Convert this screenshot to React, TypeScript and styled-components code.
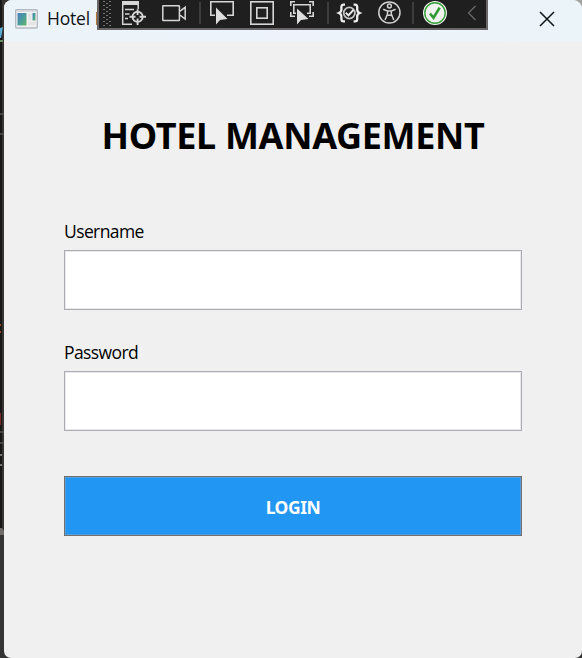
import React from "react";
import styled, { createGlobalStyle } from "styled-components";

const GlobalStyle = createGlobalStyle`
  * { box-sizing: border-box; }
  body { margin: 0; overflow: hidden; background: #1c1c1c; }
`;

const Screen = styled.div`
  position: relative;
  width: 582px;
  height: 658px;
  padding-left: 4px;
  overflow: hidden;
  background: linear-gradient(90deg, #343434 50%, #a2a2a2 50%) top / 100% 20px no-repeat, #343434;
  font-family: "Open Sans", "Noto Sans", sans-serif;
`;

const Backdrop = styled.svg`
  position: absolute;
  left: 0;
  top: 0;
`;

const Window = styled.main`
  position: relative;
  display: flex;
  flex-direction: column;
  width: 578px;
  height: 658px;
  overflow: hidden;
  border-radius: 8px 9px 7px 7px;
  background: #f0f0f0;
`;

const TitleBar = styled.header`
  display: flex;
  align-items: center;
  flex: none;
  height: 41px;
  padding: 0 27px 4px 11px;
  background: linear-gradient(90deg, #ebf4f9, #eef3fb 50%, #ebf4f9);
`;

const WindowTitle = styled.span`
  margin: -2px 0 0 9px;
  flex: 1;
  font-size: 17.5px;
  line-height: 24px;
  letter-spacing: -0.2px;
  word-spacing: 0.4px;
  white-space: nowrap;
  color: #101214;
`;

const CloseButton = styled.button`
  display: flex;
  padding: 0;
  border: 0;
  background: none;
`;

const DebugBar = styled.div`
  position: absolute;
  left: 97px;
  top: 0;
  width: 391px;
  height: 30px;
  border: solid #6b6767;
  border-width: 0 2px 2px;
  background: #1f1f1f;
`;

const Form = styled.form`
  display: flex;
  flex-direction: column;
  padding: 68px 60px 0;
`;

const Heading = styled.h1`
  margin: 0 0 59px;
  height: 54px;
  text-align: center;
  white-space: nowrap;
  font-family: "Noto Sans", sans-serif;
  font-size: 36px;
  line-height: 54px;
  font-weight: 700;
  letter-spacing: -0.32px;
  color: #000;
`;

const Field = styled.div`
  display: flex;
  flex-direction: column;
  height: 121px;
`;

const Label = styled.label<{ $spacing: number }>`
  height: 28px;
  font-size: 17.5px;
  line-height: 18px;
  letter-spacing: ${(p) => p.$spacing}px;
  color: #000;
`;

const Input = styled.input`
  width: 458px;
  height: 60px;
  padding: 0 12px;
  border: 1px solid #abadb3;
  outline: none;
  background: #fff;
  box-shadow: inset 0 0 0 1px #e9e9ec;
  font: inherit;
  font-size: 18px;
`;

const LoginButton = styled.button`
  height: 60px;
  margin-top: 12px;
  padding: 1px 0 0;
  border: 1px solid #707070;
  background: #2196f3;
  box-shadow: inset 0 0 0 1px #559ddb;
  color: #fff;
  font: 700 17.5px/24px "Noto Sans", sans-serif;
  letter-spacing: -0.45px;
`;

const AppIcon = () => (
  <svg width="23" height="20" viewBox="0 0 23 20">
    <defs>
      <linearGradient id="pane" x1="0" y1="0" x2="1" y2="1">
        <stop offset="0" stopColor="#4a7fc0" />
        <stop offset="0.5" stopColor="#4b9c9d" />
        <stop offset="1" stopColor="#65b66b" />
      </linearGradient>
    </defs>
    <rect x="0.7" y="0.7" width="21.6" height="18.3" rx="1" fill="#f3f3f3" stroke="#b5b9c1" strokeWidth="1.4" />
    <path d="M1.5 2.5H21.5" stroke="#d9dbe0" />
    <rect x="2.5" y="4" width="9" height="12.5" fill="url(#pane)" />
    <rect x="13" y="4" width="3.5" height="7.5" fill="#e3e4e5" />
    <rect x="17.5" y="4" width="3" height="7.5" fill="url(#pane)" />
    <rect x="13" y="12.5" width="7.5" height="4" fill="#e5e5e5" />
  </svg>
);

const gripDots = Array.from({ length: 13 }, (_, row) =>
  (row % 2 ? [7] : [4, 10]).map((x) => ({ x: 99 + x, y: row * 2 + 1 })),
).flat();

const DebugIcons = () => (
  <svg width="387" height="28" viewBox="99 0 387 28" fill="none">
    {gripDots.map((d) => (
      <rect key={`${d.x}-${d.y}`} x={d.x} y={d.y} width="2" height="1" fill="#737373" />
    ))}
    <g fill="#3d3d3d">
      <rect x="199" y="2" width="2" height="22" />
      <rect x="327" y="2" width="2" height="22" />
      <rect x="412" y="2" width="2" height="22" />
    </g>
    <g stroke="#d6d6d6" strokeWidth="1.5">
      <path d="M122.7 4V24.3H132M138.2 5V9" />
      <rect x="122" y="1" width="17" height="4" fill="#d6d6d6" stroke="none" />
      <path d="M125 9.5H134M125 14H129.5M125 18.5H128" />
      <circle cx="137.6" cy="16.8" r="5.1" strokeWidth="1.9" />
      <path d="M137.6 9.2V15M137.6 18.6V25M129.5 16.8H135.5M139.5 16.8H146" strokeWidth="1.9" />
      <rect x="162.8" y="5.8" width="16.6" height="14.6" rx="0.5" />
      <path d="M180 11.2L185.2 7.3V19L180 15.2" />
    </g>
    <g stroke="#d6d6d6" strokeWidth="1.6">
      <path d="M215 15.2H210.8V1.8H233.2V15.2H227" />
      <rect x="250.8" y="1.8" width="22.4" height="22.4" />
      <rect x="256.8" y="7.8" width="10.4" height="10.4" />
      <path d="M290.8 6V1.8H295M309 1.8H313.2V6M290.8 12V16.2H295M309 16.2H313.2V12" />
      <path d="M296 13.2H293.8V4.8H310.2V13.2H307" />
    </g>
    <path d="M216 7.5V24.5L220 20L227.5 19Z M297 8.5V24.5L301 20L308.5 19Z" fill="#dedede" />
    <g stroke="#ededed" strokeWidth="2.3">
      <path d="M345 4.6H343.6Q341.4 4.6 341.4 7V9.5Q341.4 12 339 13Q341.4 14 341.4 16.5V19Q341.4 21.4 343.6 21.4H345M353.6 4.6H355Q357.2 4.6 357.2 7V9.5Q357.2 12 359.6 13Q357.2 14 357.2 16.5V19Q357.2 21.4 355 21.4H353.6" />
      <circle cx="349.3" cy="13" r="5.6" stroke="#c4c4c4" strokeWidth="1.8" />
      <path d="M345.8 12.8L348.5 15.4L353.4 9.8" strokeWidth="2" />
    </g>
    <g stroke="#d0d0d0" strokeWidth="1.5">
      <circle cx="389.4" cy="12.5" r="10.6" />
      <circle cx="389.4" cy="6" r="1.9" />
      <path d="M383.2 9.3L387.5 11V14L385 20M395.6 9.3L391.3 11V14L393.8 20M387.4 11H391.4M387.5 15.3H391.3" />
    </g>
    <circle cx="435" cy="13" r="12" fill="#f0f3ef" />
    <circle cx="435" cy="13" r="10.2" stroke="#35a038" strokeWidth="1.4" />
    <path d="M430 13.5L433.5 17.8L439.7 7.6" stroke="#2f9a32" strokeWidth="2.6" />
    <path d="M475.5 6L468.5 13L475.5 20" stroke="#686868" strokeWidth="1.3" />
  </svg>
);

export default function App() {
  return (
    <Screen>
      <GlobalStyle />
      <Backdrop width="12" height="658">
        <path d="M0 0H2V535H0Z" fill="#171717" />
        <path d="M2 0H4V530H2Z" fill="#373431" />
        <path d="M0 28L3 27L1 38H0Z" fill="#58acd5" />
        <path d="M0 41H3" stroke="#668e5f" strokeWidth="2" />
        <path d="M0 114H4M0 134H4M0 432H4M0 443H4" stroke="#494746" strokeWidth="2" />
        <path d="M0 325H1M0 332H1" stroke="#a04a25" strokeWidth="2" />
        <rect y="413" width="1" height="12" fill="#7c2929" />
        <path d="M0 455H2M0 465H2" stroke="#cfcfcf" />
        <path d="M0 528H2L4 531V535H0Z" fill="#706d6d" />
      </Backdrop>
      <Window>
        <TitleBar>
          <AppIcon />
          <WindowTitle>Hotel M</WindowTitle>
          <CloseButton type="button" aria-label="Close">
            <svg width="16" height="16" viewBox="0 0 16 16">
              <path d="M1 1L15 15M15 1L1 15" stroke="#111416" strokeWidth="1.5" />
            </svg>
          </CloseButton>
        </TitleBar>
        <Form onSubmit={(e) => e.preventDefault()}>
          <Heading>HOTEL MANAGEMENT</Heading>
          <Field>
            <Label htmlFor="username" $spacing={-0.6}>Username</Label>
            <Input id="username" />
          </Field>
          <Field>
            <Label htmlFor="password" $spacing={-0.58}>Password</Label>
            <Input id="password" type="password" />
          </Field>
          <LoginButton type="submit">LOGIN</LoginButton>
        </Form>
      </Window>
      <DebugBar>
        <DebugIcons />
      </DebugBar>
    </Screen>
  );
}
